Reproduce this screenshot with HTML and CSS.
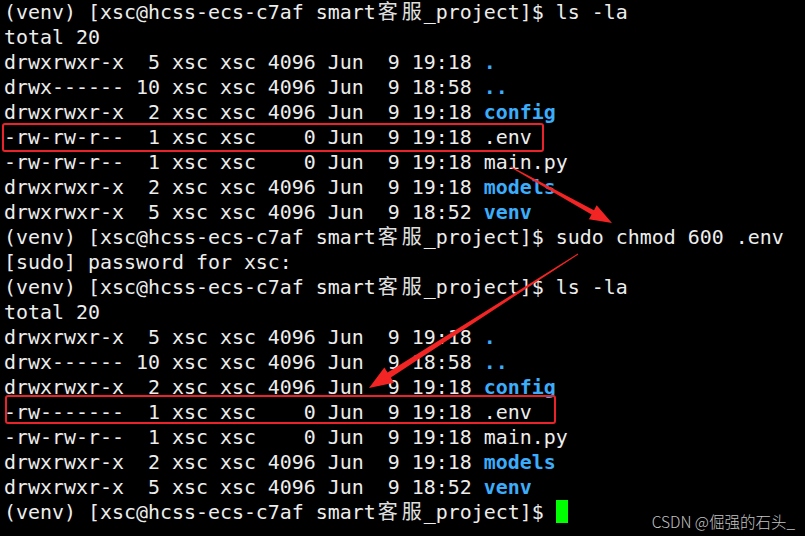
FILE: index.html
```html
<!DOCTYPE html>
<html lang="zh-CN">
<head>
<meta charset="utf-8">
<title>terminal</title>
<link rel="stylesheet" href="styles.css">
</head>
<body>
<main class="term">
<pre class="screen">(venv) [xsc@hcss-ecs-c7af smart<span class="cjk">客服</span>_project]$ ls -la
total 20
drwxrwxr-x  5 xsc xsc 4096 Jun  9 19:18 <span class="dir">.</span>
drwx------ 10 xsc xsc 4096 Jun  9 18:58 <span class="dir">..</span>
drwxrwxr-x  2 xsc xsc 4096 Jun  9 19:18 <span class="dir">config</span>
-rw-rw-r--  1 xsc xsc    0 Jun  9 19:18 .env
-rw-rw-r--  1 xsc xsc    0 Jun  9 19:18 main.py
drwxrwxr-x  2 xsc xsc 4096 Jun  9 19:18 <span class="dir">models</span>
drwxrwxr-x  5 xsc xsc 4096 Jun  9 18:52 <span class="dir">venv</span>
(venv) [xsc@hcss-ecs-c7af smart<span class="cjk">客服</span>_project]$ sudo chmod 600 .env
[sudo] password for xsc:
(venv) [xsc@hcss-ecs-c7af smart<span class="cjk">客服</span>_project]$ ls -la
total 20
drwxrwxr-x  5 xsc xsc 4096 Jun  9 19:18 <span class="dir">.</span>
drwx------ 10 xsc xsc 4096 Jun  9 18:58 <span class="dir">..</span>
drwxrwxr-x  2 xsc xsc 4096 Jun  9 19:18 <span class="dir">config</span>
-rw-------  1 xsc xsc    0 Jun  9 19:18 .env
-rw-rw-r--  1 xsc xsc    0 Jun  9 19:18 main.py
drwxrwxr-x  2 xsc xsc 4096 Jun  9 19:18 <span class="dir">models</span>
drwxrwxr-x  5 xsc xsc 4096 Jun  9 18:52 <span class="dir">venv</span>
(venv) [xsc@hcss-ecs-c7af smart<span class="cjk">客服</span>_project]$ <span class="cursor"></span></pre>
<svg class="marks" width="805" height="536" viewBox="0 0 805 536" aria-hidden="true">
  <rect x="3" y="124" width="540" height="27" rx="2" fill="none" stroke="#e8232a" stroke-width="2"/>
  <rect x="6" y="396" width="549" height="27" rx="2" fill="none" stroke="#e8232a" stroke-width="2"/>
  <polygon fill="#f22424" points="510.76,167.44 591.55,214.52 588.88,219.33 612,223 596.64,205.33 593.97,210.14 511.24,166.56"/>
  <polygon fill="#f22424" points="577.73,253.58 387.58,372.53 384.34,367.47 369,388 394.06,382.63 390.82,377.58 578.27,254.42"/>
</svg>
<div class="watermark">CSDN @倔强的石头_</div>
</main>
</body>
</html>
```

FILE: styles.css
```css
html, body {
  margin: 0;
  padding: 0;
  background: #000;
}

.term {
  position: relative;
  width: 805px;
  height: 536px;
  overflow: hidden;
  background: #000;
}

.screen {
  margin: 0;
  padding: 0 0 0 4px;
  font-family: "DejaVu Sans Mono", monospace;
  font-size: 19.93px;
  line-height: 25px;
  color: #ededed;
  white-space: pre;
}

.dir {
  color: #3cadfa;
  font-weight: bold;
}

.cjk {
  font-family: "Noto Sans CJK SC", sans-serif;
  font-size: 20px;
  line-height: 0;
  letter-spacing: 4px;
  padding-left: 2px;
  margin-right: -2px;
  color: #e0e0e0;
}

.cursor {
  display: inline-block;
  width: 12px;
  height: 23px;
  vertical-align: top;
  background: #00ff00;
}

.marks {
  position: absolute;
  left: 0;
  top: 0;
  pointer-events: none;
}

.watermark {
  position: absolute;
  right: 10px;
  bottom: 6px;
  font-family: "Noto Sans CJK SC", "Noto Sans", sans-serif;
  font-size: 15.5px;
  font-weight: 300;
  color: #c4c4c4;
  line-height: 18px;
}
```
